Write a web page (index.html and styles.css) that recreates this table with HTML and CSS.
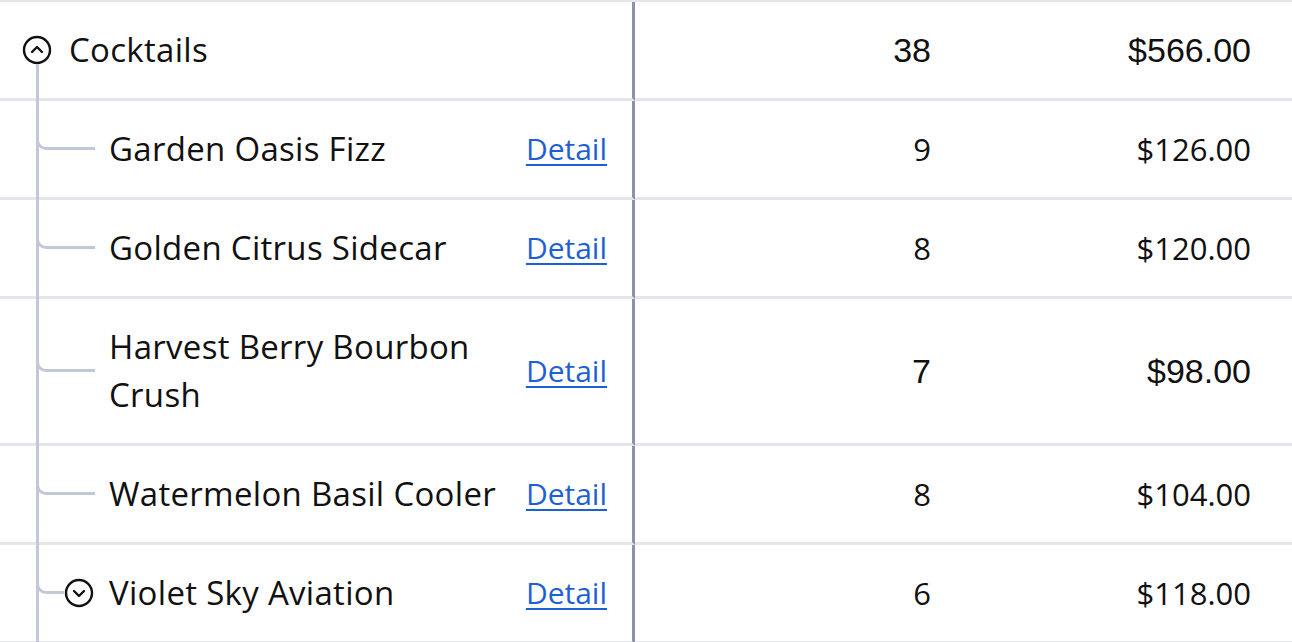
FILE: index.html
```html
<!DOCTYPE html>
<html lang="en">
<head>
    <meta charset="UTF-8">
    <title>Sales by Item</title>
    <link rel="stylesheet" href="styles.css">
</head>
<body>

    <div class="report">

        <!-- Group row -->
        <div class="row group">
            <div class="name-cell">
                <span class="toggle">
                    <svg viewBox="0 0 30 30" width="30" height="30"><circle cx="15" cy="15" r="13" fill="none" stroke="#111" stroke-width="2.4"/><path d="M10 17 L15 12 L20 17" fill="none" stroke="#111" stroke-width="2.4" stroke-linecap="round" stroke-linejoin="round"/></svg>
                </span>
                <span class="name">Cocktails</span>
            </div>
            <div class="num alt">38</div>
            <div class="num amount alt">$566.00</div>
        </div>

        <!-- Items -->
        <div class="row child">
            <div class="name-cell">
                <span class="slot"></span>
                <span class="name">Garden Oasis Fizz</span>
                <a class="detail" href="#">Detail</a>
            </div>
            <div class="num">9</div>
            <div class="num amount">$126.00</div>
        </div>

        <div class="row child">
            <div class="name-cell">
                <span class="slot"></span>
                <span class="name">Golden Citrus Sidecar</span>
                <a class="detail" href="#">Detail</a>
            </div>
            <div class="num">8</div>
            <div class="num amount">$120.00</div>
        </div>

        <div class="row child">
            <div class="name-cell">
                <span class="slot"></span>
                <span class="name">Harvest Berry Bourbon Crush</span>
                <a class="detail" href="#">Detail</a>
            </div>
            <div class="num alt">7</div>
            <div class="num amount alt">$98.00</div>
        </div>

        <div class="row child">
            <div class="name-cell">
                <span class="slot"></span>
                <span class="name">Watermelon Basil Cooler</span>
                <a class="detail" href="#">Detail</a>
            </div>
            <div class="num">8</div>
            <div class="num amount">$104.00</div>
        </div>

        <div class="row child has-toggle">
            <div class="name-cell">
                <span class="slot">
                    <svg viewBox="0 0 30 30" width="30" height="30"><circle cx="15" cy="15" r="13" fill="none" stroke="#111" stroke-width="2.4"/><path d="M10 13 L15 18 L20 13" fill="none" stroke="#111" stroke-width="2.4" stroke-linecap="round" stroke-linejoin="round"/></svg>
                </span>
                <span class="name">Violet Sky Aviation</span>
                <a class="detail" href="#">Detail</a>
            </div>
            <div class="num">6</div>
            <div class="num amount">$118.00</div>
        </div>

    </div>

</body>
</html>
```

FILE: styles.css
```css
body {
    margin: 0;
    font-family: "Open Sans", sans-serif;
    color: #111;
    background: #fff;
}
.report {
    border-top: 2px solid #e5e5ec;
}
.row {
    display: grid;
    grid-template-columns: 635px 325px 1fr;
    font-size: 33px;
    line-height: 48px;
}
.row > div {
    padding: 24px 0;
    border-bottom: 3px solid #e5e5ec;
}
.name-cell {
    position: relative;
    display: flex;
    align-items: center;
    border-right: 3px solid #8a93aa;
    padding-right: 25px !important;
}
.group .name-cell {
    padding-left: 22px;
    gap: 17px;
}
.toggle, .slot {
    width: 30px;
    height: 30px;
    flex: none;
    display: flex;
}
.child .name-cell {
    padding-left: 64px;
    gap: 15px;
}
.name {
    flex: 1;
    padding-right: 6px;
    letter-spacing: 0.3px;
}
.detail {
    font-size: 30px;
    color: #1f5fd6;
    text-decoration: underline;
    text-decoration-thickness: 2px;
    text-underline-offset: 4px;
}
.num {
    display: flex;
    align-items: center;
    justify-content: flex-end;
    font-size: 31px;
    padding-right: 29px !important;
}
.amount {
    padding-right: 41px !important;
}
.alt {
    font-family: "Liberation Sans", Arial, sans-serif;
    font-size: 34px;
}

/* tree connectors */
.group .name-cell::before {
    content: "";
    position: absolute;
    left: 36px;
    top: calc(50% + 14px);
    bottom: -3px;
    width: 3px;
    background: #c3c8d8;
}
.child .name-cell::before {
    content: "";
    position: absolute;
    left: 36px;
    top: -3px;
    bottom: -3px;
    width: 3px;
    background: #c3c8d8;
}
.child .name-cell::after {
    content: "";
    position: absolute;
    left: 36px;
    top: -3px;
    width: 56px;
    height: calc(50% + 1px);
    border-left: 3px solid #c3c8d8;
    border-bottom: 3px solid #c3c8d8;
    border-bottom-left-radius: 10px;
}
.has-toggle .name-cell::after {
    width: 25px;
}
```
